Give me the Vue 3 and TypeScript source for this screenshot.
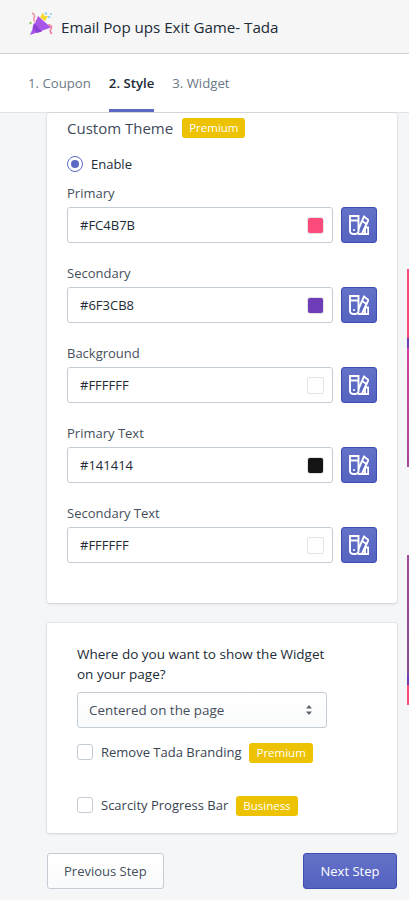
<script setup lang="ts">
const fields = [
  { label: 'Primary', value: '#FC4B7B', color: '#fc4b7b' },
  { label: 'Secondary', value: '#6F3CB8', color: '#6f3cb8' },
  { label: 'Background', value: '#FFFFFF', color: '#ffffff' },
  { label: 'Primary Text', value: '#141414', color: '#141414' },
  { label: 'Secondary Text', value: '#FFFFFF', color: '#ffffff' },
]
</script>

<template>
  <div class="page">
    <header class="top">
      <svg class="logo" viewBox="0 0 26 26" width="26" height="26">
        <path d="M9 4 L22 15.500 L1 23 Z" fill="#a855e8" />
        <path d="M5 11 L13 19.500 L8 21 L3.500 16 Z" fill="#8b3fd6" />
        <path d="M11 5.500 L14 0.500 L15.500 4 L19 4 L16 9 Z" fill="#f6d92e" />
        <path d="M3 1 Q7 3 5 6 Q4 8 6 10" fill="none" stroke="#ef8fa0" stroke-width="1.500" />
        <path d="M19 13 Q24 13 22 17 Q20 19 23 22" fill="none" stroke="#ee7f9c" stroke-width="1.600" />
        <circle cx="17" cy="1.500" r="1.200" fill="#8ed4ee" />
        <circle cx="20" cy="5" r="1.300" fill="#8ed4ee" />
        <circle cx="22" cy="2" r="1" fill="#8ed4ee" />
        <circle cx="1.500" cy="11" r="1.200" fill="#8bd058" />
      </svg>
      <span class="title">Email Pop ups Exit Game- Tada</span>
    </header>
    <nav class="tabs">
      <span class="tab">1. Coupon</span>
      <span class="tab active">2. Style</span>
      <span class="tab">3. Widget</span>
    </nav>
    <main class="content">
      <section class="card theme">
        <div class="heading">
          <span class="heading-text">Custom Theme</span>
          <span class="badge">Premium</span>
        </div>
        <div class="radio-row">
          <span class="radio"><span class="radio-dot"></span></span>
          <span>Enable</span>
        </div>
        <div v-for="f in fields" :key="f.label" class="field">
          <div class="label">{{ f.label }}</div>
          <div class="input-row">
            <div class="input">
              <span>{{ f.value }}</span>
              <span class="swatch" :style="{ background: f.color }"></span>
            </div>
            <button class="pick" type="button" aria-label="Pick colour">
              <svg viewBox="0 0 20 20" width="20" height="20" fill="none" stroke="#fff" stroke-width="1.900">
                <path d="M1 1H9.500V16Q9.500 19 5.200 19Q1 19 1 16Z" />
                <path d="M1 5.500H9.500" />
                <circle cx="5" cy="15" r="1.100" fill="#fff" stroke="none" />
                <path d="M9.500 14L15 1.500L19.500 5L13 18.500" />
                <path d="M13 6L17.500 9" />
                <path d="M9 19H19.200V12.500H16V19" />
              </svg>
            </button>
          </div>
        </div>
      </section>

      <section class="card widget">
        <p class="question">Where do you want to show the Widget on your page?</p>
        <div class="select">
          <span>Centered on the page</span>
          <svg viewBox="0 0 8 12" width="8" height="12"><path d="M4 1L7 4.500H1ZM4 11L1 7.500H7Z" fill="#5c6470" /></svg>
        </div>
        <label class="check first">
          <span class="box"></span>
          <span>Remove Tada Branding</span>
          <span class="badge">Premium</span>
        </label>
        <label class="check second">
          <span class="box"></span>
          <span>Scarcity Progress Bar</span>
          <span class="badge">Business</span>
        </label>
      </section>

      <div class="actions">
        <button class="btn" type="button">Previous Step</button>
        <button class="btn primary" type="button">Next Step</button>
      </div>
    </main>
    <div class="strip strip-a"></div>
    <div class="strip strip-b"></div>
  </div>
</template>

<style>
html, body { margin: 0; background: #f4f6f8; }
</style>

<style scoped>
.page {
  position: relative;
  width: 409px;
  height: 900px;
  overflow: hidden;
  background: #f4f6f8;
  color: #212b36;
  font-family: "Open Sans", "Noto Sans", sans-serif;
  font-size: 13px;
}
.top {
  height: 53px;
  display: flex;
  align-items: center;
  padding-left: 29px;
  gap: 6px;
  background: #f6f6f7;
  border-bottom: 1px solid #cfcfd2;
}
.logo { flex: none; margin-top: -3px; }
.title { font-size: 15.2px; letter-spacing: -0.05px; }
.tabs {
  height: 58px;
  display: flex;
  align-items: stretch;
  padding-left: 28px;
  gap: 18px;
  background: #fff;
  border-bottom: 1px solid #dfe3e8;
}
.tab {
  display: flex;
  align-items: center;
  padding-top: 3px;
  box-sizing: border-box;
  height: 58px;
  font-size: 13.2px;
  color: #6b7785;
  border-bottom: 3px solid transparent;
}
.tab.active { color: #212b36; font-weight: 600; border-bottom-color: #5c6ac4; }
.content { padding: 0 12px 0 47px; }
.card {
  background: #fff;
  border-radius: 3px;
  box-shadow: 0 0 0 1px rgba(63, 63, 68, 0.05), 0 1px 3px 0 rgba(63, 63, 68, 0.15);
  box-sizing: border-box;
}
.theme { height: 490px; padding: 5px 20px 0; }
.heading { display: flex; align-items: center; gap: 9px; height: 20px; }
.heading-text { font-size: 15px; color: #3f4b5b; }
.badge {
  background: #edc200;
  color: #fff;
  font-size: 11.5px;
  font-weight: 500;
  line-height: 20px;
  height: 20px;
  padding: 0 7px;
  border-radius: 3px;
}
.radio-row { display: flex; align-items: center; gap: 8px; margin: 16px 0 9px; height: 20px; }
.radio {
  width: 16px;
  height: 16px;
  box-sizing: border-box;
  border: 1px solid #5c6ac4;
  border-radius: 50%;
  display: flex;
  align-items: center;
  justify-content: center;
}
.radio-dot { width: 8px; height: 8px; border-radius: 50%; background: #5c6ac4; }
.field { margin-bottom: 20px; }
.label { height: 20px; line-height: 20px; margin-bottom: 4px; color: #454f5b; }
.input-row { display: flex; gap: 8px; }
.input {
  width: 266px;
  height: 36px;
  box-sizing: border-box;
  display: flex;
  align-items: center;
  justify-content: space-between;
  padding: 0 9px 0 12px;
  background: #fff;
  border: 1px solid #c4cdd5;
  border-radius: 3px;
}
.swatch {
  width: 15px;
  height: 15px;
  border-radius: 2px;
  box-shadow: 0 0 0 1px rgba(63, 63, 68, 0.15);
}
.pick {
  width: 36px;
  height: 36px;
  padding: 0;
  display: flex;
  align-items: center;
  justify-content: center;
  background: linear-gradient(180deg, #6371c7, #5563c1);
  border: 1px solid #3f4eae;
  border-radius: 3px;
}
.widget { height: 210px; margin-top: 20px; padding: 21px 30px 0; }
.question { margin: 0; width: 250px; font-size: 13.5px; line-height: 20px; color: #212b36; }
.select {
  margin-top: 8px;
  width: 250px;
  height: 36px;
  box-sizing: border-box;
  display: flex;
  align-items: center;
  justify-content: space-between;
  padding: 0 13px 0 11px;
  font-size: 13.4px;
  background: linear-gradient(180deg, #fff, #f9fafb);
  border: 1px solid #c4cdd5;
  border-radius: 3px;
  color: #454f5b;
}
.check { display: flex; align-items: center; height: 20px; color: #3a4552; }
.check.first { margin-top: 14px; }
.check.second { margin-top: 33px; }
.box {
  width: 16px;
  height: 16px;
  box-sizing: border-box;
  margin-right: 8px;
  background: #fff;
  border: 1px solid #c4cdd5;
  border-radius: 3px;
}
.check .badge { margin: 1px 0 0 8px; }
.actions { display: flex; justify-content: space-between; margin-top: 20px; }
.btn {
  height: 36px;
  padding: 0 16px;
  font: inherit;
  color: #454f5b;
  background: linear-gradient(180deg, #fff, #f9fafb);
  border: 1px solid #c4cdd5;
  border-radius: 3px;
}
.btn.primary {
  width: 94px;
  color: #fff;
  background: linear-gradient(180deg, #6371c7, #5563c1);
  border-color: #3f4eae;
}
.strip { position: absolute; left: 407px; width: 2px; }
.strip-a { top: 269px; height: 198px; background: linear-gradient(180deg, #fc4b7b 0, #fc4b7b 35%, #6f3cb8 35%, #6f3cb8 40%, #d63fa0 40%, #a4479f 100%); }
.strip-b { top: 555px; height: 150px; background: linear-gradient(180deg, #a4479f 0, #864a94 80%, #6f3cb8 80%, #6f3cb8 87%, #fc4b7b 87%, #fc4b7b 100%); }
</style>
